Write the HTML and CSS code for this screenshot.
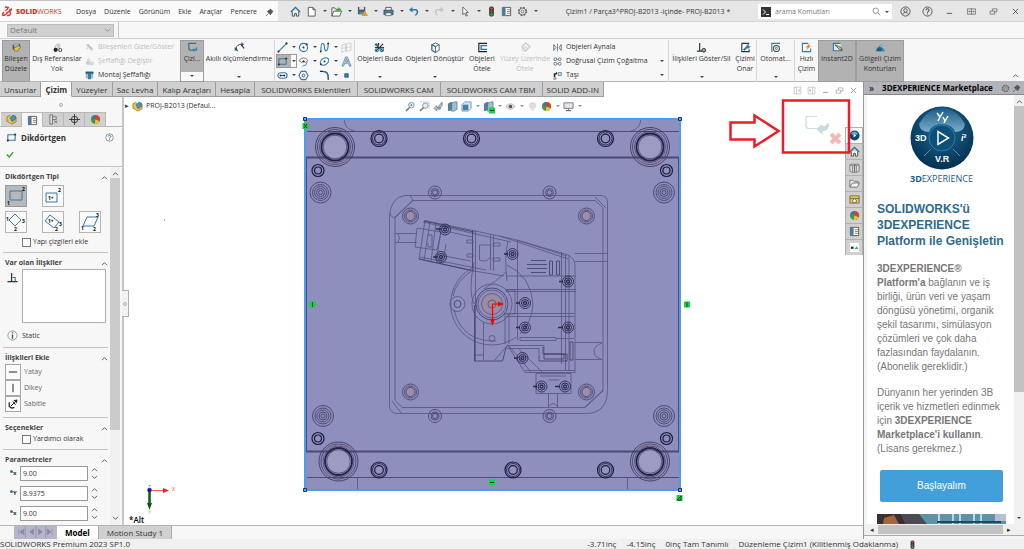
FILE: index.html
```html
<!DOCTYPE html>
<html lang="tr">
<head>
    <meta charset="UTF-8">
    <title>SOLIDWORKS Premium 2023 - Çizim1</title>
    <meta name="viewport" content="width=device-width, initial-scale=1.0">
    <link rel="stylesheet" href="styles.css">
</head>
<body>

<!-- icon sprite -->
<svg class="sprite" aria-hidden="true">
    <symbol id="i-down" viewBox="0 0 4 4"><path d="M0 1h4L2 3z" fill="#444"/></symbol>
    <symbol id="i-up" viewBox="0 0 8 6"><path d="M1 5l3-3 3 3" fill="none" stroke="#555" stroke-width="1.100"/></symbol>
    <symbol id="i-chev" viewBox="0 0 8 6"><path d="M1 1l3 3 3-3" fill="none" stroke="#555" stroke-width="1.100"/></symbol>
    <symbol id="i-pin" viewBox="0 0 10 10"><path d="M6 1l3 3-1 .5L7 6.500 6 7.500 2.500 4l1-1L5.500 2zM4 6L1 9" fill="#555" stroke="#555" stroke-width=".7"/></symbol>
    <symbol id="i-home" viewBox="0 0 12 12"><path d="M2.500 6v5h2.500V8h2v3h2.500V6" fill="#fff" stroke="#444"/><path d="M1 6.500l5-5 5 5" fill="none" stroke="#2a6c93" stroke-width="1.500"/></symbol>
    <symbol id="i-new" viewBox="0 0 12 12"><path d="M2.500 1.500h5l2.500 2.500v7H2.500zM7.500 1.500V4H10" fill="#fff" stroke="#555"/></symbol>
    <symbol id="i-open" viewBox="0 0 12 12"><path d="M1 11V2h3l1 1.500h3V5M1 11l2-5.500h8.500L9.500 11z" fill="#fff" stroke="#555"/><path d="M5 7c0-3 1-4 3-4V1l3.500 3L8 6.500V5C6.500 5 6 5.500 5 7z" fill="#4aa32f"/></symbol>
    <symbol id="i-save" viewBox="0 0 12 12"><path d="M1 1h8v8H1z" fill="#4a5560"/><path d="M2.500 1h5v3h-5z" fill="#d7e2ea"/><path d="M2.500 6h5v3h-5z" fill="#3d8fb8"/><path d="M8.500 5l3.500 6H5z" fill="#e8972c"/></symbol>
    <symbol id="i-print" viewBox="0 0 12 12"><path d="M3 4.500v-3h6v3" fill="#fff" stroke="#555"/><path d="M1 4.500h10v5H1z" fill="#3b7fa8" stroke="#444" stroke-width=".8"/><path d="M3 7.500h6v3H3z" fill="#fff" stroke="#555" stroke-width=".8"/></symbol>
    <symbol id="i-undo" viewBox="0 0 12 12"><path d="M3 4h5c3 0 3 5 0 6" fill="none" stroke="#2f7ca8" stroke-width="1.700"/><path d="M1 4l4-3v6z" fill="#2f7ca8"/></symbol>
    <symbol id="i-redo" viewBox="0 0 12 12"><path d="M9 4H4c-3 0-3 5 0 6" fill="none" stroke="#c3c3c3" stroke-width="1.500"/><path d="M11 4L7 1v6z" fill="#c3c3c3"/></symbol>
    <symbol id="i-cursor" viewBox="0 0 12 12"><path d="M3 1l6 6H6.500l1.500 3.500-1.500.5L5 7.500 3 9.500z" fill="#fff" stroke="#555" stroke-width=".9"/></symbol>
    <symbol id="i-light" viewBox="0 0 12 12"><rect x="3.500" y=".5" width="5" height="11" rx="2" fill="#2c2c2c"/><circle cx="6" cy="2.800" r="1.500" fill="#e23b2b"/><circle cx="6" cy="6" r="1.300" fill="#7a6a20"/><circle cx="6" cy="9.200" r="1.500" fill="#33a640"/></symbol>
    <symbol id="i-list" viewBox="0 0 12 12"><path d="M1.500 1.500h9v9h-9z" fill="#fff" stroke="#555"/><path d="M2 2h3v8H2z" fill="#3b86b1"/><path d="M6.500 4H10M6.500 6H10M6.500 8H10M3 4h1M3 6h1M3 8h1" stroke="#666" stroke-width=".8"/></symbol>
    <symbol id="i-gear" viewBox="0 0 12 12"><circle cx="6" cy="6" r="4.300" fill="none" stroke="#666" stroke-width="1.600" stroke-dasharray="2 1.370"/><circle cx="6" cy="6" r="3.700" fill="none" stroke="#666" stroke-width=".8"/><circle cx="6" cy="6" r="1.500" fill="none" stroke="#666" stroke-width=".8"/></symbol>
    <symbol id="i-user" viewBox="0 0 12 12"><g fill="none" stroke="#444" stroke-width=".9"><circle cx="6" cy="6" r="5"/><circle cx="6" cy="4.800" r="1.900"/><path d="M2.800 9.700c.5-3.500 5.900-3.500 6.400 0"/></g></symbol>
    <symbol id="i-help" viewBox="0 0 12 12"><g fill="none" stroke="#444" stroke-width=".9"><circle cx="6" cy="6" r="5"/><path d="M4.300 4.700c0-2.300 3.500-2 3.400 0C7.700 6 6 5.800 6 7.400M6 8.300v1" stroke-width="1.100"/></g></symbol>
    <symbol id="i-help2" viewBox="0 0 12 12"><circle cx="6" cy="6" r="5" fill="#fff" stroke="#666" stroke-width=".9"/><path d="M4.300 4.700c0-2.300 3.500-2 3.400 0C7.700 6 6 5.800 6 7.400M6 8.300v1.200" fill="none" stroke="#2f7ca8" stroke-width="1.300"/></symbol>
    <symbol id="i-min" viewBox="0 0 12 12"><path d="M2.500 8.500h7" stroke="#555" stroke-width="1.200"/></symbol>
    <symbol id="i-split" viewBox="0 0 12 12"><path d="M.5 2.500h11v7H.5zM6 2v8M2 6h3M7 6h3M3 5v2M9 5v2" fill="none" stroke="#555" stroke-width=".9"/></symbol>
    <symbol id="i-restore" viewBox="0 0 12 12"><path d="M1.500 5.500h6v4h-6zM4.500 5V2.500h6v4H8" fill="none" stroke="#555" stroke-width=".9"/></symbol>
    <symbol id="i-x" viewBox="0 0 12 12"><path d="M2.500 2.500l7 7m0-7l-7 7" stroke="#444" stroke-width="1.100"/></symbol>
    <symbol id="i-search" viewBox="0 0 12 12"><circle cx="5" cy="5" r="3.600" fill="none" stroke="#777"/><path d="M7.600 7.600L11 11" stroke="#777" stroke-width="1.200"/></symbol>
    <symbol id="i-part" viewBox="0 0 12 12"><path d="M1 3l3-1.500L6 3v2l4-2.500 1 1.500v4.500L6.500 11 1 8z" fill="#e8bc3a" stroke="#8a6a14" stroke-width=".7"/><path d="M4.500 4.500l3-3.300 3 1.300v3l-3 2.500-3-1z" fill="#4692b8" stroke="#2a5f80" stroke-width=".6"/><path d="M2.500 5l2 1v3" fill="none" stroke="#fff2b0" stroke-width=".8"/></symbol>
    <symbol id="i-editpart" viewBox="0 0 12 12"><path d="M1.500 4L5 1l5 1.500v4L6 10 2 8z" fill="#3f4a58"/><circle cx="6" cy="4" r="3" fill="#8fb4cc"/><path d="M4 10l-1-3 5-3 2.500 1.500L7 10z" fill="#edc03f" stroke="#6b5413" stroke-width=".6"/></symbol>
    <symbol id="i-ref" viewBox="0 0 12 12"><path d="M3 6l2-4 3 3-2 2zM6 3l2-1 1 3-2 2z" fill="#eee" stroke="#aaa" stroke-width=".7"/><circle cx="4" cy="8.500" r="2.300" fill="#222"/><circle cx="9" cy="8.800" r="1.700" fill="none" stroke="#333"/></symbol>
    <symbol id="i-hide" viewBox="0 0 12 12"><path d="M2 2l8 8M4 2l6 6" stroke="#c4c4c4" stroke-width="1.500"/><path d="M1 7l2-2 2 2-2 2z" fill="#ddd"/></symbol>
    <symbol id="i-trans" viewBox="0 0 12 12"><circle cx="5" cy="4" r="2.500" fill="#ddd"/><circle cx="4" cy="8" r="2.800" fill="#ccc"/><circle cx="9" cy="8.500" r="2.200" fill="#ddd" stroke="#bbb" stroke-width=".6"/></symbol>
    <symbol id="i-asm" viewBox="0 0 12 12"><path d="M1 1h10v9H1z" fill="#a9b8c0"/><path d="M1 1h10v3H8v7H4V4H1z" fill="#2d82a8"/><path d="M1 1h10v2H1z" fill="#1f5f7f"/></symbol>
    <symbol id="i-sketch" viewBox="0 0 12 12"><path d="M10 1.500H2v5q0 2.500 2.500 2.500H7" fill="none" stroke="#33738f" stroke-width="1.300"/><path d="M11 6v3.500H8V11L5.500 8.800 8 6.800V8h1.500V6z" fill="#2e84ab"/></symbol>
    <symbol id="i-dim" viewBox="0 0 12 12"><path d="M2 7c1-3 3-4.500 6-4.500" fill="none" stroke="#333"/><path d="M8 0l3 2.500L8 5zM.5 6l3.300.5L1 10z" fill="#236a91"/><path d="M4 10l-2-2.500M8 3l3 4" stroke="#333" stroke-width="1.300"/></symbol>
    <symbol id="i-line" viewBox="0 0 12 12"><path d="M2 10l8-8" stroke="#2f7ca8" stroke-width="1.300"/><circle cx="1.600" cy="10.400" r="1.200" fill="#333"/><circle cx="10.400" cy="1.600" r="1.200" fill="#333"/></symbol>
    <symbol id="i-circ" viewBox="0 0 12 12"><circle cx="6" cy="6" r="4.500" fill="none" stroke="#2f7ca8" stroke-width="1.200"/><circle cx="6" cy="6" r="1.100" fill="#333"/><circle cx="9.500" cy="2.500" r="1.200" fill="#333"/></symbol>
    <symbol id="i-spline" viewBox="0 0 12 12"><path d="M2 10c0-12 4-9 4-4s4 6 4-4" fill="none" stroke="#2f7ca8" stroke-width="1.200"/><circle cx="2" cy="10.300" r="1.100" fill="#333"/><circle cx="10" cy="1.700" r="1.100" fill="#333"/></symbol>
    <symbol id="i-plane" viewBox="0 0 12 12"><path d="M1 3l4-1v8l-4 1zM6 2l5-1v8l-5 1zM1 7l10-2" fill="none" stroke="#d0d0d0"/></symbol>
    <symbol id="i-rect" viewBox="0 0 12 12"><path d="M2 3h8v6H2z" fill="none" stroke="#2f7ca8" stroke-width="1.200"/><circle cx="2" cy="9.300" r="1.200" fill="#333"/><circle cx="10" cy="2.700" r="1.200" fill="#333"/></symbol>
    <symbol id="i-arc" viewBox="0 0 12 12"><path d="M1 5q5-6 10 0L8 7Q6 4 4 7z" fill="#eef4f8" stroke="#777"/><circle cx="6" cy="6" r="1.200" fill="#333"/><path d="M5 11q4 0 5-4" fill="none" stroke="#2f7ca8"/></symbol>
    <symbol id="i-ell" viewBox="0 0 12 12"><ellipse cx="6" cy="6" rx="5" ry="3.500" transform="rotate(-35 6 6)" fill="none" stroke="#2f7ca8" stroke-width="1.200"/><circle cx="6" cy="6" r="1" fill="#333"/><circle cx="2" cy="9" r="1" fill="#333"/></symbol>
    <symbol id="i-text" viewBox="0 0 12 12"><path d="M1 11L5 1h2l4 10H9L8 8H4l-1 3zM5 6h2.500L6 3z" fill="#b5cbd8" stroke="#4d7c96" stroke-width=".7" fill-rule="evenodd"/></symbol>
    <symbol id="i-slot" viewBox="0 0 12 12"><rect x="1" y="3" width="10" height="6" rx="3" fill="none" stroke="#2f7ca8" stroke-width="1.200"/><path d="M3 6h6" stroke="#333"/><circle cx="4" cy="6" r="1" fill="#333"/><circle cx="8" cy="6" r="1" fill="#333"/></symbol>
    <symbol id="i-hex" viewBox="0 0 12 12"><path d="M3.500 1.500h5L11 6l-2.500 4.500h-5L1 6z" fill="none" stroke="#2f7ca8" stroke-width="1.200"/><circle cx="6" cy="6" r="1.500" fill="none" stroke="#333" stroke-width=".8"/></symbol>
    <symbol id="i-fillet" viewBox="0 0 12 12"><path d="M1 1.500h3q6 0 6 6V11" fill="none" stroke="#222" stroke-width="1.200"/><path d="M4 1.500q6 0 6 6" fill="none" stroke="#2f7ca8" stroke-width="1.200"/></symbol>
    <symbol id="i-point" viewBox="0 0 12 12"><path d="M4 4h4v4H4z" fill="#2f7ca8" stroke="#2b5f7d" stroke-width=".7"/></symbol>
    <symbol id="i-trim" viewBox="0 0 12 12"><path d="M1 2l9 8M10 2L2 10M5 1v3M1 6h10" stroke="#333" stroke-width="1.300"/><circle cx="3" cy="3" r="1.700" fill="#2f7ca8"/><circle cx="8.500" cy="8.500" r="2" fill="none" stroke="#2f7ca8" stroke-width="1.200"/><circle cx="3" cy="9" r="1.700" fill="none" stroke="#2f7ca8" stroke-width="1.200"/></symbol>
    <symbol id="i-cube" viewBox="0 0 12 12"><path d="M2 3l4-2 4 2v6l-4 2.500L2 9zM2 3l4 2 4-2M6 5v6" fill="#fff" stroke="#444" stroke-width=".9"/><path d="M2 3v6l4 2.500V5z" fill="none" stroke="#2f7ca8" stroke-width="1.100"/></symbol>
    <symbol id="i-offset" viewBox="0 0 12 12"><path d="M11 1.500H2v9h9" fill="none" stroke="#222" stroke-width="1.300"/><path d="M11 4H4.500v4H11" fill="none" stroke="#2f7ca8" stroke-width="1.500"/></symbol>
    <symbol id="i-surf" viewBox="0 0 12 12"><path d="M2 5l4-4 5 4-5 5z" fill="#eee" stroke="#c9c9c9" stroke-width="1.300"/><path d="M4 11l-2-3 4-3 2 3" fill="none" stroke="#d0d0d0"/></symbol>
    <symbol id="i-mirror" viewBox="0 0 12 12"><path d="M1 2v8l3-4zM11 2v8L8 6z" fill="none" stroke="#555"/><path d="M6 1v10" stroke="#2f7ca8"/></symbol>
    <symbol id="i-pattern" viewBox="0 0 12 12"><g fill="none" stroke="#555"><circle cx="3" cy="3" r="1.900"/><circle cx="9" cy="3" r="1.900"/><circle cx="3" cy="9" r="1.900"/><circle cx="9" cy="9" r="1.900"/></g><path d="M5 3h2M5 9h2" stroke="#2f7ca8"/></symbol>
    <symbol id="i-move" viewBox="0 0 12 12"><path d="M1 3h3v-2l2 2-2 2H3v3H1z" fill="#222"/><path d="M7 2h4v4H7z" fill="#cfe3ee" stroke="#2f7ca8"/><path d="M1 9h3v2H1z" fill="none" stroke="#555" stroke-width=".8"/></symbol>
    <symbol id="i-rel" viewBox="0 0 12 12"><path d="M4 1v9M1 10h7" stroke="#333" stroke-width="1.300"/><circle cx="8.500" cy="9" r="2" fill="#aaa" stroke="#222"/></symbol>
    <symbol id="i-repair" viewBox="0 0 12 12"><path d="M10 8v2.500H2v-9h8" fill="none" stroke="#333" stroke-width="1.200"/><path d="M4 9l4-4" stroke="#2f7ca8" stroke-width="2"/><path d="M7 4l2-2 1 1-1 1 1 1 1-1 .5 1-2 2L8 7 6.500 5.500z" fill="#2f7ca8"/></symbol>
    <symbol id="i-auto" viewBox="0 0 12 12"><path d="M2 11V1.500h9" fill="none" stroke="#2f7ca8" stroke-width="1.200"/><circle cx="7" cy="7" r="3.300" fill="none" stroke="#444" stroke-width="1.100"/><circle cx="7" cy="7" r="1.200" fill="none" stroke="#444" stroke-width=".8"/></symbol>
    <symbol id="i-rapid" viewBox="0 0 12 12"><path d="M8 1.500H1.500v9h9V7" fill="none" stroke="#2f7ca8" stroke-width="1.200"/><path d="M10 1L5 6h2.500L5 9.500l6-5.500H8.500z" fill="#e87f26"/></symbol>
    <symbol id="i-2d" viewBox="0 0 12 12"><path d="M9 1.500H1.500v8h9V7" fill="#dce9f0" stroke="#2f7ca8" stroke-width="1.200"/><path d="M3 3l7 3 1 3-3-1z" fill="#e6bd40" stroke="#444" stroke-width=".8"/></symbol>
    <symbol id="i-shade" viewBox="0 0 12 12"><path d="M1 9l6-7 2 5 2 3H6z" fill="#2d82ab"/><path d="M3 6h4v4H1z" fill="#1f5e80"/><path d="M7 2l2 5-4-2z" fill="#7ab9d6"/></symbol>
    <symbol id="i-tree" viewBox="0 0 12 12"><path d="M2 1h3v10H2zM5 3h4v3H5M7 7l3 3M7 10l3-3" fill="#ddd" stroke="#666" stroke-width=".9"/></symbol>
    <symbol id="i-target" viewBox="0 0 12 12"><circle cx="6" cy="6" r="3.500" fill="none" stroke="#333"/><path d="M6 0v12M0 6h12" stroke="#333"/></symbol>
    <symbol id="i-ball" viewBox="0 0 12 12"><circle cx="6" cy="6" r="5" fill="#3d9a4b"/><path d="M6 6L1.500 4A5 5 0 0 1 6 1z" fill="#3a72b8"/><path d="M6 1a5 5 0 0 1 4.500 7L6 6z" fill="#e03e2d"/><path d="M6 6l4.500 2A5 5 0 0 1 5 11z" fill="#f2c230"/></symbol>
    <symbol id="i-corner" viewBox="0 0 12 12"><path d="M5 1v9.500M.5 10.500h11" stroke="#333" stroke-width="1.400"/><path d="M6 6h3v4" fill="none" stroke="#2f7ca8" stroke-width="1.200"/></symbol>
    <symbol id="i-info" viewBox="0 0 12 12"><circle cx="6" cy="6" r="5" fill="#fff" stroke="#777" stroke-width=".8"/><path d="M6 5v4.500M6 2.500v1.300" stroke="#1d6690" stroke-width="1.600"/></symbol>
    <symbol id="i-anchor" viewBox="0 0 12 12"><path d="M3 9l7-7M7 2l3-.2V5M6 3l3 4" stroke="#222" stroke-width="1.200" fill="none"/><path d="M1.500 4v5q2 3 6 1" fill="none" stroke="#222" stroke-width="1.500"/><circle cx="10" cy="2" r="1.300" fill="#222"/></symbol>
    <symbol id="i-mag" viewBox="0 0 12 12"><circle cx="7" cy="4.500" r="3" fill="#dfeef6" stroke="#7c8f9b"/><path d="M5 7l-4 4" stroke="#5c7686" stroke-width="1.600"/><path d="M6 4.500h2M7 3.500v2" stroke="#2f7ca8" stroke-width=".8"/></symbol>
    <symbol id="i-magarea" viewBox="0 0 12 12"><path d="M2 1h9v8" fill="none" stroke="#9aa8b0" stroke-width=".8" stroke-dasharray="1.500 1"/><circle cx="7" cy="5" r="3" fill="#dfeef6" stroke="#7c8f9b"/><path d="M5 7l-4 4" stroke="#5c7686" stroke-width="1.600"/></symbol>
    <symbol id="i-prev" viewBox="0 0 12 12"><path d="M10 1L5 7l2 1 3-3zM1 8l3-3v2h4v2H4v2z" fill="#a8bfca" stroke="#6c8795" stroke-width=".8"/></symbol>
    <symbol id="i-section" viewBox="0 0 12 12"><path d="M1 3l3-2h2v8l-3 2H1z" fill="#56809a"/><path d="M5 3l3-2h3v8L8 11H5z" fill="#9dc0d2" stroke="#48697c" stroke-width=".7"/></symbol>
    <symbol id="i-view" viewBox="0 0 12 12"><path d="M1 4l3-3h7v7l-3 3H1z" fill="#d5e6ef" stroke="#56809a" stroke-width=".8"/><path d="M2 4h6v6H2z" fill="#3f83a8"/></symbol>
    <symbol id="i-eye" viewBox="0 0 12 12"><path d="M1 6q5-6 10 0-5 6-10 0z" fill="#eee" stroke="#999" stroke-width=".8"/><circle cx="6" cy="6" r="2" fill="#555"/></symbol>
    <symbol id="i-ghost" viewBox="0 0 12 12"><circle cx="6" cy="5" r="4" fill="#ddd"/><path d="M4 8h4v3H4z" fill="#e8e8e8"/></symbol>
    <symbol id="i-screen" viewBox="0 0 12 12"><path d="M1 2h10v6H1z" fill="#dfe7ec" stroke="#777"/><path d="M6 8v2M3 10.500h6" stroke="#777" stroke-width="1.200"/></symbol>
    <symbol id="i-doc-l" viewBox="0 0 12 12"><path d="M1.500 1.500h9v9h-9zM4.500 1.500v9M8.500 4.500v3L6.500 6z" fill="none" stroke="#888" stroke-width=".9"/></symbol>
    <symbol id="i-doc-r" viewBox="0 0 12 12"><path d="M1.500 1.500h9v9h-9zM7.500 1.500v9M3.500 4.500v3L5.500 6z" fill="none" stroke="#888" stroke-width=".9"/></symbol>
    <symbol id="i-lib" viewBox="0 0 12 12"><path d="M1 3l3-1 2 1v8l-2 .5L1 10zM6 3l3-1 2 1v7l-3 1.500L6 11zM4 4v7M8 4v7M1 3l3 1 2-1 2 1 3-1" fill="#ddd" stroke="#666" stroke-width=".8"/></symbol>
    <symbol id="i-folder" viewBox="0 0 12 12"><path d="M1 10V2.500h3.500L6 4h4v1.500M1 10l2.500-4.500h8L9 10z" fill="#f2f2f2" stroke="#666" stroke-width=".9"/></symbol>
    <symbol id="i-palette" viewBox="0 0 12 12"><path d="M1 2h10v8H1z" fill="#ecc653" stroke="#6b5a20" stroke-width=".8"/><path d="M1 5h10M4 7l2-2 2 2v2H4z" fill="#fff" stroke="#555" stroke-width=".8"/></symbol>
    <symbol id="i-forum" viewBox="0 0 12 12"><path d="M1 1h10v10H1z" fill="#fff"/><path d="M2 5h3v2.500H2z" fill="#333"/><path d="M6 7.500L8.500 4.500l1.500 3z" fill="#28a694"/></symbol>
    <symbol id="i-globe" viewBox="0 0 12 12"><circle cx="6" cy="6" r="5.500" fill="#12466a"/><path d="M2 4q4-4.500 8 0-4 3-8 0z" fill="#6fa6c8"/><path d="M5 4.500v3.500L8 6z" fill="#fff"/></symbol>
</svg>

<header class="titlebar">
    <nav class="menu">
        <a href="#" class="brand">
            <svg viewBox="0 0 12 12"><path d="M3 1c4 .3 4 2 0 3.500M2 6c-4 4 0 5 4 0L9.500 4.500M10 3c-5 1-1 3-1.500 5S5 9.500 5 9.500M5 2l2-1" fill="none" stroke="#d9312b" stroke-width="1.300"/></svg>
            <b>SOLID</b>WORKS
        </a>
        <a href="#">Dosya</a>
        <a href="#">Düzenle</a>
        <a href="#">Görünüm</a>
        <a href="#">Ekle</a>
        <a href="#">Araçlar</a>
        <a href="#">Pencere</a>
        <svg class="ic small"><use href="#i-pin"/></svg>
    </nav>
    <div class="quick">
        <button aria-label="Giriş"><svg class="ic"><use href="#i-home"/></svg></button>
        <button aria-label="Yeni"><svg class="ic"><use href="#i-new"/></svg><svg class="dd"><use href="#i-down"/></svg></button>
        <button aria-label="Aç"><svg class="ic"><use href="#i-open"/></svg><svg class="dd"><use href="#i-down"/></svg></button>
        <button aria-label="Kaydet"><svg class="ic"><use href="#i-save"/></svg><svg class="dd"><use href="#i-down"/></svg></button>
        <button aria-label="Yazdır"><svg class="ic"><use href="#i-print"/></svg><svg class="dd"><use href="#i-down"/></svg></button>
        <button aria-label="Geri al"><svg class="ic"><use href="#i-undo"/></svg><svg class="dd"><use href="#i-down"/></svg></button>
        <button aria-label="Yinele"><svg class="ic"><use href="#i-redo"/></svg><svg class="dd"><use href="#i-down"/></svg></button>
        <button aria-label="Seç"><svg class="ic"><use href="#i-cursor"/></svg><svg class="dd"><use href="#i-down"/></svg></button>
        <button aria-label="Yeniden oluştur"><svg class="ic"><use href="#i-light"/></svg></button>
        <button aria-label="Dosya özellikleri"><svg class="ic"><use href="#i-list"/></svg></button>
        <button aria-label="Seçenekler"><svg class="ic"><use href="#i-gear"/></svg><svg class="dd"><use href="#i-down"/></svg></button>
    </div>
    <h1 class="doc-title">Çizim1 / Parça3^PROJ-B2013 -içinde- PROJ-B2013 *</h1>
    <div class="search">
        <svg class="prompt" viewBox="0 0 10 10"><path d="M0 0h10v10H0z" fill="#333"/><path d="M2 2.500L4.500 5 2 7.500M5 7.500h3" fill="none" stroke="#fff"/></svg>
        <input type="text" placeholder="arama Komutları" aria-label="arama Komutları">
        <svg class="ic small"><use href="#i-search"/></svg>
        <svg class="dd"><use href="#i-down"/></svg>
    </div>
    <div class="window-buttons">
        <button aria-label="Kullanıcı"><svg class="ic"><use href="#i-user"/></svg></button>
        <button aria-label="Yardım"><svg class="ic"><use href="#i-help"/></svg></button>
        <button aria-label="Küçült"><svg class="ic small"><use href="#i-min"/></svg></button>
        <button aria-label="Böl"><svg class="ic small"><use href="#i-split"/></svg></button>
        <button aria-label="Önceki boyut"><svg class="ic small"><use href="#i-restore"/></svg></button>
        <button aria-label="Kapat"><svg class="ic small"><use href="#i-x"/></svg></button>
    </div>
</header>

<div class="config-bar">
    <select aria-label="Konfigürasyon" disabled><option>Default</option></select>
    <svg class="arrow"><use href="#i-chev"/></svg>
</div>

<div class="ribbon">
    <button class="cmd on"><svg class="ic"><use href="#i-editpart"/></svg>Bileşen<br>Düzele</button>
    <button class="cmd"><svg class="ic"><use href="#i-ref"/></svg>Dış Referanslar<br>Yok</button>
    <div class="cmd-list">
        <button disabled><svg class="ic small"><use href="#i-hide"/></svg>Bileşenleri Gizle/Göster</button>
        <button disabled><svg class="ic small"><use href="#i-trans"/></svg>Şeffaflığı Değiştir</button>
        <button><svg class="ic small"><use href="#i-asm"/></svg>Montaj Şeffaflığı</button>
    </div>
    <button class="cmd on split"><svg class="ic"><use href="#i-sketch"/></svg>Çizi...<svg class="dd"><use href="#i-down"/></svg></button>
    <button class="cmd"><svg class="ic"><use href="#i-dim"/></svg>Akıllı ölçümlendirme<svg class="dd"><use href="#i-down"/></svg></button>
    <div class="tools sep">
        <button aria-label="Çizgi"><svg class="ic"><use href="#i-line"/></svg><svg class="dd"><use href="#i-down"/></svg></button>
        <button aria-label="Daire"><svg class="ic"><use href="#i-circ"/></svg><svg class="dd"><use href="#i-down"/></svg></button>
        <button aria-label="Spline"><svg class="ic"><use href="#i-spline"/></svg><svg class="dd"><use href="#i-down"/></svg></button>
        <button aria-label="Düzlem"><svg class="ic"><use href="#i-plane"/></svg></button>
        <button aria-label="Dikdörtgen" class="on"><svg class="ic"><use href="#i-rect"/></svg><svg class="dd"><use href="#i-down"/></svg></button>
        <button aria-label="Yay"><svg class="ic"><use href="#i-arc"/></svg><svg class="dd"><use href="#i-down"/></svg></button>
        <button aria-label="Elips"><svg class="ic"><use href="#i-ell"/></svg><svg class="dd"><use href="#i-down"/></svg></button>
        <button aria-label="Metin"><svg class="ic"><use href="#i-text"/></svg></button>
        <button aria-label="Yuva"><svg class="ic"><use href="#i-slot"/></svg><svg class="dd"><use href="#i-down"/></svg></button>
        <button aria-label="Poligon"><svg class="ic"><use href="#i-hex"/></svg></button>
        <button aria-label="Radyus"><svg class="ic"><use href="#i-fillet"/></svg><svg class="dd"><use href="#i-down"/></svg></button>
        <button aria-label="Nokta"><svg class="ic"><use href="#i-point"/></svg></button>
    </div>
    <button class="cmd sep"><svg class="ic"><use href="#i-trim"/></svg>Objeleri Buda<svg class="dd"><use href="#i-down"/></svg></button>
    <button class="cmd"><svg class="ic"><use href="#i-cube"/></svg>Objeleri Dönüştür<svg class="dd"><use href="#i-down"/></svg></button>
    <button class="cmd"><svg class="ic"><use href="#i-offset"/></svg>Objeleri<br>Ötele</button>
    <button class="cmd" disabled><svg class="ic"><use href="#i-surf"/></svg>Yüzey Üzerinde<br>Ötele</button>
    <div class="cmd-list">
        <button><svg class="ic small"><use href="#i-mirror"/></svg>Objeleri Aynala</button>
        <button><svg class="ic small"><use href="#i-pattern"/></svg>Doğrusal Çizim Çoğaltma<svg class="dd end"><use href="#i-down"/></svg></button>
        <button><svg class="ic small"><use href="#i-move"/></svg>Taşı<svg class="dd end"><use href="#i-down"/></svg></button>
    </div>
    <button class="cmd sep"><svg class="ic"><use href="#i-rel"/></svg>İlişkileri Göster/Sil<svg class="dd"><use href="#i-down"/></svg></button>
    <button class="cmd"><svg class="ic"><use href="#i-repair"/></svg>Çizimi<br>Onar</button>
    <button class="cmd sep"><svg class="ic"><use href="#i-auto"/></svg>Otomat...<svg class="dd"><use href="#i-down"/></svg></button>
    <button class="cmd sep"><svg class="ic"><use href="#i-rapid"/></svg>Hızlı<br>Çizim</button>
    <button class="cmd on"><svg class="ic"><use href="#i-2d"/></svg>Instant2D</button>
    <button class="cmd on"><svg class="ic"><use href="#i-shade"/></svg>Gölgeli Çizim<br>Konturları</button>
    <button class="collapse" aria-label="Daralt"><svg class="arrow"><use href="#i-up"/></svg></button>
</div>

<main class="workspace">
    <section class="document">
        <nav class="tabs">
            <a href="#">Unsurlar</a>
            <a href="#" class="active">Çizim</a>
            <a href="#">Yüzeyler</a>
            <a href="#">Sac Levha</a>
            <a href="#">Kalıp Araçları</a>
            <a href="#">Hesapla</a>
            <a href="#" class="wide">SOLIDWORKS Eklentileri</a>
            <a href="#" class="wide">SOLIDWORKS CAM</a>
            <a href="#" class="wide">SOLIDWORKS CAM TBM</a>
            <a href="#">SOLID ADD-IN</a>
        </nav>

        <div class="split-view">
            <aside class="property">
                <div class="grip"><i></i></div>
                <div class="panel-tabs">
                    <button aria-label="Tasarım ağacı"><svg class="ic"><use href="#i-part"/></svg></button>
                    <button aria-label="Özellikler" class="active"><svg class="ic"><use href="#i-list"/></svg></button>
                    <button aria-label="Konfigürasyonlar"><svg class="ic"><use href="#i-tree"/></svg></button>
                    <button aria-label="DimXpert"><svg class="ic"><use href="#i-target"/></svg></button>
                    <button aria-label="Görünümler"><svg class="ic"><use href="#i-ball"/></svg></button>
                </div>
                <div class="panel-head">
                    <h2><svg class="ic"><use href="#i-rect"/></svg>Dikdörtgen<svg class="ic small"><use href="#i-help2"/></svg></h2>
                    <button class="ok" aria-label="Tamam"><svg viewBox="0 0 10 8"><path d="M1 4l3 3 5-6" fill="none" stroke="#35a31c" stroke-width="1.700"/></svg></button>
                </div>
                <div class="panel-scroll">
                    <div class="sections">
                        <section>
                            <h3>Dikdörtgen Tipi<svg class="arrow"><use href="#i-up"/></svg></h3>
                            <div class="types">
                                <button aria-label="Köşe dikdörtgen" class="on"><svg viewBox="0 0 20 20"><path d="M4 5h12v9H4z"/><text x="1" y="19">1</text><text x="16" y="5">2</text></svg></button>
                                <button aria-label="Merkez dikdörtgen"><svg viewBox="0 0 20 20"><path d="M3 7h11v9H3z"/><text x="5" y="14">1+</text><text x="15" y="6">2</text></svg></button>
                                <button aria-label="3 nokta köşe dikdörtgen" class="first"><svg viewBox="0 0 20 20"><path d="M9 2l6 6-6 6-6-6z"/><text x="0" y="9">1</text><text x="16" y="11">3</text><text x="8" y="19">2</text></svg></button>
                                <button aria-label="3 nokta merkez dikdörtgen"><svg viewBox="0 0 20 20"><path d="M7 3l9 7-5 6-9-7z"/><text x="5" y="11">1+</text><text x="16" y="14">3</text><text x="12" y="19">2</text></svg></button>
                                <button aria-label="Paralelkenar"><svg viewBox="0 0 20 20"><path d="M7 5h11l-4 9H3z"/><text x="1" y="18">1</text><text x="13" y="19">2</text><text x="16" y="5">3</text></svg></button>
                            </div>
                            <label class="check"><input type="checkbox">Yapı çizgileri ekle</label>
                        </section>
                        <section>
                            <h3>Var olan İlişkiler<svg class="arrow"><use href="#i-up"/></svg></h3>
                            <div class="relations">
                                <svg class="ic"><use href="#i-corner"/></svg>
                                <select size="4" aria-label="Var olan ilişkiler"></select>
                            </div>
                            <p class="status-line"><svg class="ic"><use href="#i-info"/></svg>Static</p>
                        </section>
                        <section>
                            <h3>İlişkileri Ekle<svg class="arrow"><use href="#i-up"/></svg></h3>
                            <div class="add-rel">
                                <button><svg class="ic" viewBox="0 0 12 12"><path d="M1 6h10" stroke="#222" stroke-width="1.200"/></svg><span>Yatay</span></button>
                                <button><svg class="ic" viewBox="0 0 12 12"><path d="M6 1v10" stroke="#222" stroke-width="1.200"/></svg><span>Dikey</span></button>
                                <button><svg class="ic"><use href="#i-anchor"/></svg><span>Sabitle</span></button>
                            </div>
                        </section>
                        <section>
                            <h3>Seçenekler<svg class="arrow"><use href="#i-up"/></svg></h3>
                            <label class="check"><input type="checkbox">Yardımcı olarak</label>
                        </section>
                        <section>
                            <h3>Parametreler<svg class="arrow"><use href="#i-up"/></svg></h3>
                            <div class="param">
                                <label for="px1"><i></i>x</label><input type="text" id="px1" value="9.00">
                                <span><svg class="arrow"><use href="#i-up"/></svg><svg class="arrow"><use href="#i-chev"/></svg></span>
                            </div>
                            <div class="param">
                                <label for="py1"><i></i>Y</label><input type="text" id="py1" value="8.9375">
                                <span><svg class="arrow"><use href="#i-up"/></svg><svg class="arrow"><use href="#i-chev"/></svg></span>
                            </div>
                            <div class="param">
                                <label for="px2"><i></i>x</label><input type="text" id="px2" value="9.00">
                                <span><svg class="arrow"><use href="#i-up"/></svg><svg class="arrow"><use href="#i-chev"/></svg></span>
                            </div>
                        </section>
                    </div>
                    <div class="scrollbar">
                        <svg class="arrow"><use href="#i-up"/></svg>
                        <div class="track"><div class="thumb long"></div></div>
                        <svg class="arrow"><use href="#i-chev"/></svg>
                    </div>
                </div>
                <div class="handle"><i></i></div>
            </aside>

            <div class="viewport">
                <div class="view-head">
                    <div class="crumb"><span>▸</span><svg class="ic"><use href="#i-part"/></svg>PROJ-B2013 (Defaul...</div>
                    <div class="view-tools">
                        <button aria-label="Sığdır"><svg class="ic"><use href="#i-mag"/></svg></button>
                        <button aria-label="Alana yakınlaştır"><svg class="ic"><use href="#i-magarea"/></svg></button>
                        <button aria-label="Önceki görünüm"><svg class="ic"><use href="#i-prev"/></svg></button>
                        <button aria-label="Kesit"><svg class="ic"><use href="#i-section"/></svg></button>
                        <button aria-label="Yönlendirme"><svg class="ic"><use href="#i-view"/></svg><svg class="dd"><use href="#i-down"/></svg></button>
                        <button aria-label="Görüntüleme stili"><svg class="ic"><use href="#i-section"/></svg><svg class="dd"><use href="#i-down"/></svg></button>
                        <button aria-label="Gizle/Göster"><svg class="ic"><use href="#i-eye"/></svg><svg class="dd"><use href="#i-down"/></svg></button>
                        <button aria-label="Görünümü düzenle"><svg class="ic"><use href="#i-ghost"/></svg></button>
                        <button aria-label="Sahne"><svg class="ic"><use href="#i-ball"/></svg><svg class="dd"><use href="#i-down"/></svg></button>
                        <button aria-label="Görünüm ayarları"><svg class="ic"><use href="#i-screen"/></svg><svg class="dd"><use href="#i-down"/></svg></button>
                    </div>
                </div>
                <div class="doc-buttons">
                    <button aria-label="Sol"><svg class="ic small"><use href="#i-doc-l"/></svg></button>
                    <button aria-label="Sağ"><svg class="ic small"><use href="#i-doc-r"/></svg></button>
                    <button aria-label="Küçült"><svg class="ic small"><use href="#i-min"/></svg></button>
                    <button aria-label="Önceki boyut"><svg class="ic small"><use href="#i-restore"/></svg></button>
                    <button aria-label="Kapat"><svg class="ic small"><use href="#i-x"/></svg></button>
                </div>

                <!-- model, origin triad and callouts -->
                <svg class="canvas" viewBox="124 97 739 428" role="img" aria-label="PROJ-B2013">
                    <defs>
                        <g id="guide" fill="none" stroke="#3c3b62">
                            <circle r="19.500" stroke-width=".9"/><circle r="17.500" stroke-width=".8"/><circle r="15.500" stroke-width=".7"/>
                            <circle r="13.500" stroke="#23224a" stroke-width="1.800"/><circle r="11.800" fill="#9c9bc4" stroke="#4a4970" stroke-width=".8"/>
                        </g>
                        <path id="rub" d="M-12 12q12 8 24 0" fill="none" stroke="#94707f"/>
                        <g id="bolt" fill="none" stroke="#1b1b40"><circle r="8" stroke-width="1.200"/><circle r="6.500" stroke-width=".8"/><circle r="4.300" stroke-width="1.200" fill="#9593bd"/></g>
                        <g id="dowel" fill="none" stroke="#1b1b40"><circle r="6" stroke-width="1.200"/><circle r="3.500" stroke-width="1.200"/></g>
                        <g id="spring" fill="none" stroke="#45446d" stroke-width=".9"><circle r="10.500"/><circle r="8"/><circle r="6"/><circle r="4"/><circle r="2"/></g>
                        <g id="hole" fill="none" stroke="#4a4972" stroke-width=".9"><circle r="6.500"/><circle r="4"/><circle r="2.500"/></g>
                        <g id="post" fill="none" stroke="#4a4972" stroke-width=".9"><circle r="8"/><circle r="6"/><circle r="4.500" fill="#9e8ea9"/></g>
                        <g id="screw" stroke="#2a2950" fill="none"><circle r="5.500" stroke-width=".9"/><circle r="3.500" stroke-width="1"/><circle r="1.500" stroke-width="1.300"/></g>
                        <path id="mate" d="M-3-3h6v6h-6z" fill="#0fd63b"/>
                    </defs>

                    <path d="M305 119h375v371H305z" fill="#8e8fbc"/>
                    <g class="m">
                        <path d="M344.500 120c0 6 4 10 10 11M640.500 120c0 6-4 10-10 11M357.500 478v11M627.500 478v11"/>
                        <path d="M307 131.500h372M307 477.500h372M306.500 158v293M678.500 158v293" class="d"/>
                        <path d="M306 157.500h373M306 451.500h373" stroke="#4b4b74" stroke-width="2"/>
                        <!-- pocket -->
                        <path d="M405 195.500h196q6.500 0 6.500 7v187q0 24-22 24H398q-8.500 0-8.500-8V215q2-18 15.500-19.500z"/>
                        <path d="M413 200.500h182l8 7V391l-18 16.500H402l-7-7V218z"/>
                        <path d="M390 213q2 6 5 4l17-16q2-3-2-5M595 197l11 11M392 401l9 12M585 407l18-17"/>
                        <path d="M575 253.500h32M575 261.500h32M575 342.500h27M575 359.500h27M602 343q-8 3-8 8.500t8 8M395 233.500h22M395 242.500h22M398 234q3 4 0 8"/>
                        <!-- slide housing -->
                        <path d="M425 220.500l86 18 56 16q8 3 8 12v106h-50l-18-28M419 259l55 12 30 5M425 220.500L419 259M430 222l-6 38M436 223l-5 38M442 225l-6 38"/>
                        <path d="M417 228l24 4-4 18-22-3zM427 235h5v12h-4v-4M423 222l88 20M420 257l66 13"/>
                        <path d="M424 221l50 11M472.500 230v39M419 259l55 12" class="d"/>
                        <path d="M475.500 230v131M490.500 234v36M493.500 235v36M479.500 245h11v12q-4 6-11 3zM467 240h6v3h-6zM467 254h6v3h-6zM493 243h7v3h-7zM493 258h7v3h-7zM446 244l-2 12 27 5M450 232l22 5"/>
                        <path d="M508 241q-4 15-1 40M517.500 240v100M561.500 252v112M565.500 255v115M569 256v115M517 240l50 16M500 236l68 23"/>
                        <path d="M531 260.500h15M527 264.500h20M527 268.500h20M531 272.500h15M549.500 261h3v14h-3zM556.500 261h3v14h-3z" class="d"/>
                        <path d="M506 276h70M506 289.500h70M506 291.500h70M506 313.500h68M506 316.500h68M520 337.500h36v3h-36zM556 338.500h18M507 345.500h37v8M507 348.500h32v8M518 348l24 24M531 372l-22-26"/>
                        <path d="M539 356v5h28v-7h-24v-7M544 354h20v5h-20zM570 342h3v18h-3z" class="d"/>
                        <path d="M525 370.500h50M536 373.500h35v20h-35zM540 376h26M548.500 380h11M548.500 393v14M557.500 393v14M549 406q4-5 8 0"/>
                        <!-- cam -->
                        <path d="M472 268a41 41 0 0 0 20 77q14 0 24-8M453 296q2-14 21-27M454 310q8 32 42 31M474 262q-6 30 0 42M533 304q-2-28-26-39M533 304q-1 18-13 30M484 289q10-6 22-17M483.500 322v38M495 360l11-13M474 355h9"/>
                        <path d="M474.500 305v56h28l4-15" class="d"/>
                        <circle cx="492" cy="304" r="20"/><circle cx="492" cy="304" r="16" class="d"/><circle cx="492" cy="304" r="14"/><circle cx="492" cy="304" r="10.500" fill="#9e8a9f"/><circle cx="492" cy="304" r="4"/>
                        <circle cx="492" cy="338.500" r="3"/><circle cx="457.500" cy="304" r="7.500"/><circle cx="457.500" cy="304" r="3.500" class="d"/>
                        <path d="M505 290h10v24h-10M505 314v30M509 314v30"/>
                    </g>
                    <use href="#guide" x="335" y="147"/><use href="#guide" x="650" y="147"/><use href="#guide" x="338.500" y="461.500"/><use href="#guide" x="650" y="461.500"/>
                    <use href="#rub" x="335" y="148"/><use href="#rub" x="650" y="148"/>
                    <path d="M326 449q12-8 25 0M638 449q12-8 25 0" fill="none" stroke="#94707f"/>
                    <use href="#bolt" x="379" y="138.500"/><use href="#bolt" x="471.500" y="138.500"/><use href="#bolt" x="605.500" y="138.500"/>
                    <use href="#bolt" x="379" y="470"/><use href="#bolt" x="513" y="470"/><use href="#bolt" x="605.500" y="470"/>
                    <use href="#dowel" x="318" y="170.500"/><use href="#dowel" x="666.500" y="170.500"/><use href="#dowel" x="318" y="438.500"/><use href="#dowel" x="666.500" y="438.500"/>
                    <use href="#spring" x="320.500" y="192.500"/><use href="#spring" x="664" y="192.500"/><use href="#spring" x="323" y="416"/><use href="#spring" x="664" y="416"/>
                    <use href="#hole" x="435" y="192.500"/><use href="#hole" x="549.500" y="192.500"/><use href="#hole" x="435" y="416"/><use href="#hole" x="549.500" y="416"/>
                    <use href="#post" x="410.500" y="216"/><use href="#post" x="586.500" y="216"/><use href="#post" x="410.500" y="392"/><use href="#post" x="586.500" y="392"/>
                    <use href="#screw" x="445" y="229.500"/><use href="#screw" x="441" y="257"/><use href="#screw" x="512.500" y="254"/><use href="#screw" x="568" y="281.500"/>
                    <use href="#screw" x="525" y="303"/><use href="#screw" x="525" y="327.500"/><use href="#screw" x="568" y="327.500"/><use href="#screw" x="522.500" y="358"/>
                    <use href="#screw" x="541.500" y="386.500"/><use href="#screw" x="565" y="386.500"/>
                    <path d="M436 229h5M433 257h4M504 254h4M559 281.500h4M516 303h4M516 327.500h4M558 327.500h5M514 358h4M533 386.500h4M555 386.500h5" stroke="#2a2950" stroke-width="1.500"/>

                    <path d="M305 119h375v371H305z" fill="none" stroke="#4a9df2" stroke-width="2"/>
                    <path d="M303.500 117.500h3v3h-3zM678.500 117.500h3v3h-3zM303.500 488.500h3v3h-3zM678.500 488.500h3v3h-3z" fill="#5ba7ee" stroke="#1d3552"/>
                    <use href="#mate" x="305.500" y="126"/><use href="#mate" x="492" y="110.500"/><use href="#mate" x="312.500" y="304.500"/>
                    <use href="#mate" x="687" y="304.500"/><use href="#mate" x="492" y="482.500"/><use href="#mate" x="679.500" y="498"/>
                    <path d="M490 110.500h4M490 482.500h4M312.500 302v5M687 302v5M304 124l3 4m0-4l-3 4M677 500l4-4v4z" stroke="#0a4a18" fill="none"/>
                    <path d="M492.500 304h8M492.500 304v17" stroke="#f00" stroke-width="1.200"/><path d="M498 301.500l6 2.500-6 2.500zM490 319h5l-2.500 7z" fill="#f00"/>

                    <!-- triad -->
                    <path d="M150 490.500h14" stroke="#f55"/><path d="M163 488l6 2.500-6 2.500z" fill="#e22"/>
                    <path d="M149.500 491v13" stroke="#0a5a12" stroke-width="2.500"/><path d="M147 503h5l-2.500 7z" fill="#0a5a12"/>
                    <circle cx="149.500" cy="490" r="2.200" fill="#1414c8"/>
                    <g class="axis"><text x="172" y="491" fill="#f05050">X</text><text x="148" y="514" fill="#6abf6a">Y</text><text x="148" y="489" fill="#5a5ae0">Z</text></g>
                    <text x="129" y="523" class="view-name">*Alt</text>
                    <path d="M164 220h1" stroke="#555"/>

                    <!-- confirmation corner -->
                    <path d="M817 116.500h-11v9q0 3 3 3h8" fill="none" stroke="#cfdbe2" stroke-width="1.200"/>
                    <path d="M817 129l5-4v2q5 0 6-4 2 7-6 8v3z" fill="#c9dbe5" stroke="#b3c8d4" stroke-width=".6"/>
                    <path d="M831 134l9 9m0-9l-9 9" stroke="#f2bab6" stroke-width="4"/>

                    <path d="M783 100.500h66v52h-66z" fill="none" stroke="#ed1c24" stroke-width="2.500"/>
                    <path d="M730.500 122.500h24v-7l24 15.500-24 15.500v-7h-24z" fill="none" stroke="#ed1c24" stroke-width="2.500"/>
                </svg>

                <div class="task-tabs">
                    <button aria-label="3DEXPERIENCE" class="active"><svg class="ic"><use href="#i-globe"/></svg></button>
                    <button aria-label="Kaynaklar"><svg class="ic"><use href="#i-home"/></svg></button>
                    <button aria-label="Tasarım kitaplığı"><svg class="ic"><use href="#i-lib"/></svg></button>
                    <button aria-label="Dosya gezgini"><svg class="ic"><use href="#i-folder"/></svg></button>
                    <button aria-label="Görünüm paleti"><svg class="ic"><use href="#i-palette"/></svg></button>
                    <button aria-label="Görünümler"><svg class="ic"><use href="#i-ball"/></svg></button>
                    <button aria-label="Özel özellikler"><svg class="ic"><use href="#i-list"/></svg></button>
                    <button aria-label="Forum"><svg class="ic"><use href="#i-forum"/></svg></button>
                </div>
            </div>
        </div>

        <nav class="sheet-tabs">
            <span class="nav"><svg viewBox="0 0 44 12"><path d="M5 3v6M10 3L6 6l4 3zM20 3l-4 3 4 3zM25 3l4 3-4 3zM34 3l4 3-4 3zM39 3v6M11.500 0v12M22.500 0v12M32.500 0v12" fill="#8a8aa8" stroke="#8a8aa8" stroke-width=".7"/></svg></span>
            <a href="#" class="active">Model</a>
            <a href="#">Motion Study 1</a>
        </nav>
    </section>

    <aside class="market">
        <header>
            <span>»</span>
            <h2>3DEXPERIENCE Marketplace</h2>
            <svg class="ic small"><use href="#i-gear"/></svg>
            <svg class="ic small"><use href="#i-pin"/></svg>
        </header>
        <div class="market-body">
            <article>
                <svg class="compass" viewBox="0 0 64 64">
                    <defs>
                        <radialGradient id="ball" cx=".5" cy=".35" r=".65"><stop offset="0" stop-color="#1d6a96"/><stop offset="1" stop-color="#04304f"/></radialGradient>
                        <linearGradient id="shine" x2="0" y2="1"><stop offset="0" stop-color="#1d5c86"/><stop offset="1" stop-color="#8dbcd8"/></linearGradient>
                    </defs>
                    <circle cx="32" cy="32" r="31.500" fill="url(#ball)"/>
                    <path d="M9 18Q18 2 32 2t23 16q-1 8-10 8-3-8-13-8t-13 8q-9 0-10-8z" fill="url(#shine)" opacity=".85"/>
                    <circle cx="32" cy="32" r="13" fill="#0f5079" stroke="#2e7ba7"/>
                    <path d="M14 14l7 7M50 14l-7 7M14 50l7-7M50 50l-7-7" stroke="#4a8fb6"/>
                    <path d="M28 25.500v13L38.500 32z" fill="none" stroke="#fff" stroke-width="1.500"/>
                    <text x="5" y="35">3D</text><text x="25" y="56">V.R</text><text x="51" y="35"><tspan font-style="italic">i</tspan>²</text>
                    <path d="M27 7l3 4 3-5M30 11l-2 4M33 11l2 4 3-5M35 15l-1 2" fill="none" stroke="#fff" stroke-width="1.400"/>
                </svg>
                <p class="logo"><b>3D</b>EXPERIENCE</p>
                <h2>SOLIDWORKS'ü 3DEXPERIENCE Platform ile Genişletin</h2>
                <p><b>3DEXPERIENCE®</b> <b>Platform'a</b> bağlanın ve iş birliği, ürün veri ve yaşam döngüsü yönetimi, organik şekil tasarımı, simülasyon çözümleri ve çok daha fazlasından faydalanın. (Abonelik gereklidir.)</p>
                <p>Dünyanın her yerinden 3B içerik ve hizmetleri edinmek için <b>3DEXPERIENCE</b> <b>Marketplace'i kullanın</b>. (Lisans gerekmez.)</p>
                <a href="#" class="start">Başlayalım</a>
                <svg class="photo" viewBox="0 0 129 60" preserveAspectRatio="xMidYMin slice">
                    <path d="M0 0h129v60H0z" fill="#5d93a6"/><path d="M0 0h24l6 10v50H0z" fill="#39302f"/><path d="M7 4l10-3 5 9H6z" fill="#a4653f"/>
                    <path d="M24 0h18l8 10H28z" fill="#4e4a55"/><path d="M62 0v10M76 0v10M83 0v10M97 0v10M104 0v10" stroke="#b9dbe2" stroke-width="2"/>
                    <path d="M60 8h64" stroke="#1f4961" stroke-width="2"/><path d="M118 0h11v7h-11z" fill="#b5bfd6"/>
                </svg>
            </article>
            <div class="scrollbar">
                <svg class="arrow"><use href="#i-up"/></svg>
                <div class="track"><div class="thumb"></div></div>
                <svg class="dd"><use href="#i-down"/></svg>
            </div>
        </div>
        <div class="hscroll"><span>◂</span><i></i><span>▸</span></div>
    </aside>
</main>

<footer class="statusbar">
    <span class="product">SOLIDWORKS Premium 2023 SP1.0</span>
    <span>-3.71inç</span>
    <span>-4.15inç</span>
    <span>0inç Tam Tanımlı</span>
    <span>Düzenleme Çizim1 (Kilitlenmiş Odaklanma)</span>
    <svg class="ic small"><use href="#i-light"/></svg>
</footer>

</body>
</html>
```

FILE: styles.css
```css
* {
    box-sizing: border-box;
}
body {
    margin: 0;
    height: 100vh;
    display: flex;
    flex-direction: column;
    overflow: hidden;
    background: #f7f7f7;
    color: #333;
    font-family: "Open Sans", "Noto Sans", sans-serif;
    font-size: 7px;
    line-height: 10px;
}
h1, h2, h3, p {
    margin: 0;
    font-size: inherit;
}
a {
    color: inherit;
    text-decoration: none;
}
button, input, select {
    font: inherit;
    color: inherit;
    margin: 0;
    padding: 0;
    border: 0;
    background: none;
    border-radius: 0;
}
button {
    display: flex;
    align-items: center;
    justify-content: center;
}
svg {
    display: block;
    flex: none;
}
.sprite {
    position: absolute;
    width: 0;
    height: 0;
}
.ic {
    width: 11px;
    height: 11px;
}
.ic.small {
    width: 9px;
    height: 9px;
}
.dd {
    width: 4px;
    height: 4px;
}
.arrow {
    width: 7px;
    height: 5px;
}

/* title bar */
.titlebar {
    display: flex;
    height: 22px;
    flex: none;
    background: #e6e6e6;
    border-top: 1px solid #c4c4c4;
    border-bottom: 1px solid #d4d4d4;
}
.menu {
    display: flex;
    align-items: center;
    gap: 8px;
    width: 278px;
    padding: 2px 4px 0 2px;
    background: #fafafa;
}
.menu .ic {
    margin-left: auto;
}
.brand {
    display: flex;
    align-items: center;
    width: 70px;
    color: #d9312b;
}
.brand svg {
    width: 12px;
    height: 12px;
    margin-right: 2px;
}
.brand b {
    font-weight: 800;
}
.quick {
    display: flex;
    align-items: center;
    justify-content: space-between;
    width: 248px;
    margin-left: 12px;
}
.quick button {
    gap: 6px;
}
.doc-title {
    flex: 1;
    text-align: center;
    font-weight: 400;
    line-height: 22px;
}
.search {
    display: flex;
    align-items: center;
    gap: 4px;
    width: 134px;
    height: 15px;
    margin: 3px 0;
    padding: 0 3px;
    background: #fff;
}
.search input {
    flex: 1;
    min-width: 0;
}
.search input::placeholder {
    color: #777;
}
.prompt {
    width: 10px;
    height: 10px;
}
.window-buttons {
    display: flex;
    align-items: center;
    gap: 11px;
    padding: 0 3px 0 8px;
}
.window-buttons button {
    width: 11px;
}

.config-bar {
    display: flex;
    align-items: center;
    width: 119px;
    height: 16px;
    flex: none;
    padding-left: 7px;
    border-right: 1px solid #c4c4c4;
}
.config-bar select {
    width: 107px;
    height: 13px;
    padding-left: 2px;
    appearance: none;
    background: #cfcfcf;
    border: 1px solid #bdbdbd;
    color: #777;
    font-size: 8px;
    opacity: 1;
}
.config-bar .arrow {
    margin-left: -10px;
    opacity: .5;
}

/* ribbon */
.ribbon {
    display: grid;
    grid-template-columns: 28px 54px 96px 24px 70px 80px 50px 62px 32px 54px 116px 66px 22px 38px 24px 38px 48px 1fr;
    height: 44px;
    flex: none;
    padding: 1px 1px 1px 2px;
    border-top: 1px solid #d0d0d0;
    border-bottom: 1px solid #b4b4b4;
    white-space: nowrap;
}
.cmd {
    display: flex;
    flex-direction: column;
    justify-content: flex-start;
    padding-top: 2px;
    min-width: 0;
}
.cmd .ic {
    margin-bottom: 1px;
}
.cmd .dd {
    margin-top: auto;
    margin-bottom: 3px;
}
.cmd.on {
    background: #b2b2b2;
    border: 1px solid #9c9c9c;
    padding-top: 1px;
}
.cmd.split {
    background: linear-gradient(#b2b2b2 31px, #fafafa 31px);
}
.cmd:disabled, .cmd-list button:disabled {
    color: #bdbdbd;
}
.sep {
    border-left: 1px solid #d8d8d8;
}
.cmd-list {
    display: grid;
    grid-template-rows: repeat(3, 14px);
    padding-left: 1px;
}
.cmd-list button {
    justify-content: flex-start;
    gap: 4px;
}
.cmd-list .end {
    margin-left: auto;
    margin-right: 4px;
}
.tools {
    display: grid;
    grid-template-columns: 21px 21px 22px 12px;
    grid-template-rows: repeat(3, 14px);
    padding-left: 1px;
}
.tools button {
    justify-content: flex-start;
    gap: 4px;
    padding-left: 1px;
}
.tools .on {
    background: linear-gradient(90deg, #b2b2b2 14px, #fafafa 14px);
    border: 1px solid #999;
    padding-left: 0;
}
.collapse {
    justify-self: end;
    align-self: end;
    padding: 4px;
}

/* workspace */
.workspace {
    display: flex;
    flex: 1;
    min-height: 0;
}
.document {
    flex: 1;
    min-width: 0;
    display: flex;
    flex-direction: column;
    background: #fff;
}
.tabs {
    display: flex;
    height: 15px;
    flex: none;
    font-size: 8px;
    line-height: 15px;
    white-space: nowrap;
}
.tabs a {
    padding: 0 4px;
    background: #cfcfcf;
    border-right: 1px solid #9c9c9c;
    border-bottom: 1px solid #9c9c9c;
}
.tabs .wide {
    padding: 0 6px;
}
.tabs .active {
    background: #fafafa;
    border-bottom-color: #fafafa;
    font-weight: 700;
}
.split-view {
    display: flex;
    flex: 1;
    min-height: 0;
}

/* property manager */
.property {
    position: relative;
    display: flex;
    flex-direction: column;
    width: 124px;
    flex: none;
    background: #f7f7f7;
    border-right: 2px solid #c6c6c6;
}
.grip {
    height: 15px;
    padding: 6px 0 0 59px;
}
.grip i, .handle i {
    display: block;
    width: 4px;
    height: 4px;
    border: 1px solid #aaa;
    border-radius: 50%;
}
.panel-tabs {
    display: flex;
    height: 15px;
    padding-left: 1px;
    border-bottom: 1px solid #b8b8b8;
}
.panel-tabs button {
    width: 21px;
    background: #d0d0d0;
    border: 1px solid #b8b8b8;
    border-left: 0;
    border-bottom: 0;
}
.panel-tabs .active {
    background: #f7f7f7;
    margin-bottom: -1px;
}
.panel-head {
    height: 40px;
    padding: 5px 8px 0 6px;
    border-bottom: 1px solid #c4c4c4;
}
.panel-head h2 {
    display: flex;
    align-items: center;
    gap: 4px;
    font-size: 8px;
}
.panel-head .small {
    margin-left: auto;
}
.ok {
    margin-top: 8px;
}
.ok svg {
    width: 8px;
    height: 7px;
}
.panel-scroll {
    display: flex;
    flex: 1;
    min-height: 0;
}
.sections {
    flex: 1;
    padding: 0 2px 0 3px;
    overflow: hidden;
}
.sections section {
    padding: 4px 0 5px 2px;
    border-bottom: 1px solid #c4c4c4;
}
.sections h3 {
    display: flex;
    align-items: center;
    justify-content: space-between;
    height: 12px;
    color: #444;
}
.types {
    display: grid;
    grid-template-columns: repeat(3, 22px);
    gap: 4px 15px;
    padding: 2px 0 4px;
}
.types .first {
    grid-column: 1;
}
.types button {
    width: 22px;
    height: 22px;
    border: 1px solid #b4b4b4;
    background: #fafafa;
}
.types .on {
    background: #b8b8b8;
    border-color: #999;
}
.types svg {
    width: 20px;
    height: 20px;
}
.types path {
    fill: none;
    stroke: #2f7ca8;
}
.types text {
    font-size: 5px;
    font-weight: 700;
}
.check {
    display: flex;
    align-items: center;
    gap: 2px;
    padding-left: 17px;
}
.check input {
    appearance: none;
    width: 9px;
    height: 9px;
    background: #fff;
    border: 1px solid #777;
}
.relations {
    display: flex;
    gap: 4px;
    padding-left: 2px;
}
.relations .ic {
    margin-top: 3px;
}
.relations select {
    flex: 1;
    height: 54px;
    margin-right: 2px;
    background: #fff;
    border: 1px solid #a9adbc;
}
.status-line {
    display: flex;
    align-items: center;
    gap: 4px;
    padding: 7px 0 1px 2px;
}
.add-rel button {
    display: flex;
    gap: 3px;
    color: #666;
}
.add-rel .ic {
    width: 16px;
    height: 16px;
    padding: 2px;
    background: #fafafa;
    border: 1px solid #a8a8a8;
}
.param {
    display: flex;
    align-items: center;
    height: 15px;
    margin-bottom: 5px;
    padding-left: 5px;
}
.param label {
    width: 10px;
    line-height: 15px;
    font-size: 6px;
    font-weight: 700;
    white-space: nowrap;
}
.param label i {
    display: inline-block;
    width: 3px;
    height: 3px;
    margin-bottom: 2px;
    border-radius: 50%;
    background: #2f7ca8;
}
.param input {
    width: 68px;
    height: 15px;
    padding: 0 2px;
    background: #fff;
    border: 1px solid #999;
}
.param span {
    display: grid;
    gap: 3px;
    padding-left: 3px;
}
.scrollbar {
    display: flex;
    flex-direction: column;
    align-items: center;
    width: 10px;
    margin-right: 2px;
    padding: 4px 0;
    background: #f0f0f0;
}
.track {
    flex: 1;
    width: 100%;
    padding: 2px 0;
}
.thumb {
    height: 70%;
    background: #c2c2c2;
}
.thumb.long {
    height: 75%;
    background: #cbcbcb;
}
.handle {
    position: absolute;
    top: 45%;
    left: 122px;
    z-index: 2;
    width: 7px;
    height: 27px;
    padding: 11px 1px;
    background: #f2f2f2;
    border: 1px solid #b0b0b0;
    border-left: 0;
}

/* graphics area */
.viewport {
    position: relative;
    flex: 1;
    min-width: 0;
}
.view-head {
    display: flex;
    align-items: center;
    height: 18px;
}
.crumb {
    display: flex;
    align-items: center;
    gap: 3px;
    width: 281px;
    padding-left: 1px;
}
.view-tools {
    display: flex;
    gap: 3px;
}
.view-tools button {
    gap: 4px;
}
.view-tools .dd, .doc-buttons {
    opacity: .6;
}
.doc-buttons {
    position: absolute;
    top: -11px;
    right: 5px;
    display: flex;
    gap: 5px;
}
.canvas {
    position: absolute;
    inset: 0;
    z-index: 1;
    width: 100%;
    height: 100%;
    pointer-events: none;
}
.m {
    fill: none;
    stroke: #55547e;
    stroke-width: .8;
}
.d {
    stroke: #3c3b62;
}
.axis text {
    font-size: 5px;
}
.view-name {
    font-size: 8px;
    font-weight: 600;
}
.task-tabs {
    position: absolute;
    top: 30px;
    right: 0;
    width: 18px;
}
.task-tabs button {
    width: 18px;
    height: 16px;
    background: #d0d0d0;
    border: 1px solid #b0b0b0;
    border-bottom: 0;
}
.task-tabs .active {
    background: #fafafa;
}
.sheet-tabs {
    display: flex;
    height: 14px;
    flex: none;
    padding-left: 14px;
    background: #f7f7f7;
    border-top: 1px solid #b4b4b4;
    font-size: 8px;
    line-height: 13px;
}
.sheet-tabs .nav {
    width: 43px;
    background: #b5b5cb;
}
.sheet-tabs a {
    padding: 0 8px;
    background: #d0d0d0;
    border-right: 1px solid #aaa;
}
.sheet-tabs .active {
    background: #fff;
    color: #000;
    font-weight: 700;
}

/* task pane */
.market {
    display: flex;
    flex-direction: column;
    width: 161px;
    flex: none;
    padding-bottom: 3px;
    background: #f5f5f5;
    border-left: 1px solid #999;
}
.market > header {
    display: flex;
    align-items: center;
    gap: 2px;
    height: 13px;
    flex: none;
    padding: 0 3px 0 5px;
    background: #b3b4b9;
    border-bottom: 1px solid #888;
    color: #000;
}
.market > header span {
    font-size: 10px;
}
.market > header h2 {
    flex: 1;
    font-size: 8px;
    text-align: center;
    white-space: nowrap;
}
.market-body {
    display: flex;
    flex: 1;
    min-height: 0;
    padding-left: 3px;
}
.market-body .scrollbar {
    margin-right: 0;
}
article {
    flex: 1;
    min-width: 0;
    padding: 11px 8px 0 10px;
    overflow: hidden;
    background: #fff;
    color: #777;
    font: 10px/14px "Liberation Sans", Arial, sans-serif;
}
article p {
    margin-bottom: 12px;
}
article h2 {
    margin-bottom: 13px;
    color: #2d6a8f;
    font-size: 12px;
    line-height: 16px;
}
.compass {
    width: 64px;
    height: 64px;
    margin: 0 auto;
}
.compass text {
    font-size: 9px;
    font-weight: 700;
    fill: #fff;
}
article .logo {
    margin: 3px 0 17px;
    text-align: center;
    color: #1d5c86;
    font: 9px/11px "Open Sans", sans-serif;
}
.start {
    display: block;
    margin: 14px 3px 12px;
    border-radius: 2px;
    background: #429fda;
    color: #fff;
    line-height: 32px;
    text-align: center;
}
.photo {
    width: 100%;
    height: 60px;
}
.hscroll {
    display: flex;
    align-items: center;
    gap: 4px;
    height: 12px;
    flex: none;
    padding: 0 13px 0 6px;
    background: #f0f0f0;
    border-bottom: 1px solid #aaa;
}
.hscroll i {
    flex: 1;
    height: 9px;
    background: #c2c2c2;
}

.statusbar {
    display: flex;
    align-items: center;
    gap: 10px;
    height: 10px;
    flex: none;
    padding-right: 107px;
    background: #f0f0f0;
    font-size: 8px;
}
.product {
    margin-right: auto;
}
```
